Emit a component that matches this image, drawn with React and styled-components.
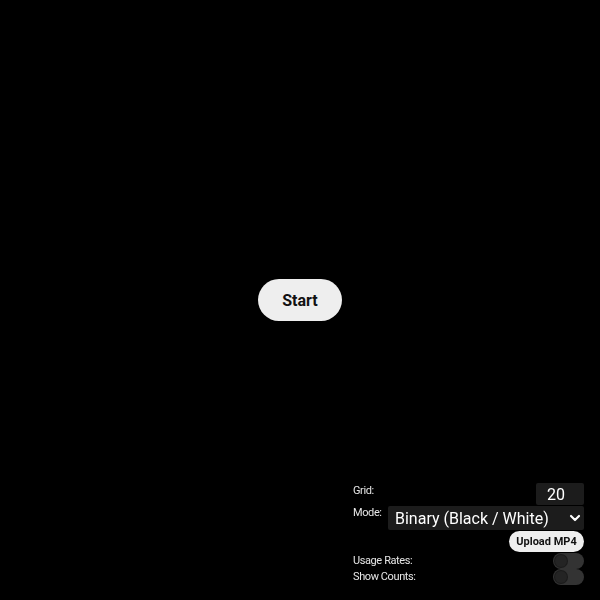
import React, { useState } from 'react';
import styled, { createGlobalStyle } from 'styled-components';
import { ChevronDown } from 'lucide-react';

const GlobalStyle = createGlobalStyle`
  html, body {
    margin: 0;
    padding: 0;
    background: #000;
    font-family: Roboto, 'Liberation Sans', sans-serif;
  }
`;

const Stage = styled.main`
  width: 100vw;
  height: 100vh;
  display: flex;
  align-items: center;
  justify-content: center;
  background: #000;
`;

const StartButton = styled.button`
  width: 84px;
  height: 42px;
  border: none;
  border-radius: 21px;
  background: #eeeeee;
  color: #111;
  font-family: Roboto, 'Liberation Sans', sans-serif;
  font-size: 16px;
  font-weight: 700;
  cursor: pointer;
`;

const Panel = styled.div`
  position: fixed;
  right: 16px;
  bottom: 15px;
  width: 231px;
  display: flex;
  flex-direction: column;
  font-size: 11px;
  color: #e6e6e6;
`;

const Row = styled.div`
  display: flex;
  justify-content: space-between;
  align-items: ${(p) => (p.$center ? 'center' : 'flex-start')};
  margin-bottom: ${(p) => p.$gap || 0}px;
  line-height: 14px;
`;

const Label = styled.label`
  padding-top: ${(p) => p.$top || 0}px;
  letter-spacing: -0.4px;
`;

const NumberInput = styled.input`
  width: 48px;
  height: 22px;
  box-sizing: border-box;
  padding: 0 0 0 11px;
  border: none;
  border-radius: 2px;
  background: #1c1c1c;
  color: #fff;
  font-family: Roboto, 'Liberation Sans', sans-serif;
  font-size: 16px;
  outline: none;
  -moz-appearance: textfield;
  &::-webkit-inner-spin-button,
  &::-webkit-outer-spin-button {
    -webkit-appearance: none;
    margin: 0;
  }
`;

const SelectWrap = styled.div`
  position: relative;
  width: 196px;
  height: 24px;
`;

const Select = styled.select`
  width: 100%;
  height: 100%;
  appearance: none;
  border: none;
  border-radius: 2px;
  padding: 0 0 0 7px;
  background: #1c1c1c;
  color: #fff;
  font-family: Roboto, 'Liberation Sans', sans-serif;
  font-size: 16px;
  outline: none;
`;

const Chevron = styled(ChevronDown)`
  position: absolute;
  right: 1px;
  top: 4px;
  pointer-events: none;
`;

const ButtonRow = styled.div`
  display: flex;
  justify-content: flex-end;
  margin-bottom: 1px;
`;

const UploadButton = styled.button`
  width: 75px;
  height: 21px;
  padding: 0;
  border: none;
  border-radius: 11px;
  background: #eeeeee;
  color: #111;
  font-family: Roboto, 'Liberation Sans', sans-serif;
  font-size: 11px;
  font-weight: 700;
  cursor: pointer;
`;

const Toggle = styled.button`
  width: 31px;
  height: 16px;
  padding: 2px;
  border: none;
  border-radius: 8px;
  background: ${(p) => (p.$on ? '#4a4a4a' : '#333')};
  display: flex;
  justify-content: ${(p) => (p.$on ? 'flex-end' : 'flex-start')};
  align-items: center;
  box-sizing: border-box;
  cursor: pointer;
`;

const Knob = styled.span`
  width: 12px;
  height: 12px;
  border-radius: 50%;
  background: #242424;
  box-shadow: 0 0 0 1px #1b1b1b;
`;

export default function App() {
  const [grid, setGrid] = useState(20);
  const [mode, setMode] = useState('binary');
  const [usage, setUsage] = useState(false);
  const [counts, setCounts] = useState(false);

  return (
    <>
      <GlobalStyle />
      <Stage>
        <StartButton>Start</StartButton>
      </Stage>
      <Panel>
        <Row $gap={1}>
          <Label $top={1}>Grid:</Label>
          <NumberInput
            type="number"
            value={grid}
            onChange={(e) => setGrid(e.target.value)}
          />
        </Row>
        <Row $gap={1}>
          <Label $top={0}>Mode:</Label>
          <SelectWrap>
            <Select value={mode} onChange={(e) => setMode(e.target.value)}>
              <option value="binary">Binary (Black / White)</option>
              <option value="gray">Grayscale</option>
              <option value="color">Color</option>
            </Select>
            <Chevron size={16} strokeWidth={3.2} color="#fff" />
          </SelectWrap>
        </Row>
        <ButtonRow>
          <UploadButton>Upload MP4</UploadButton>
        </ButtonRow>
        <Row $center>
          <Label>Usage Rates:</Label>
          <Toggle $on={usage} onClick={() => setUsage(!usage)}>
            <Knob />
          </Toggle>
        </Row>
        <Row $center>
          <Label>Show Counts:</Label>
          <Toggle $on={counts} onClick={() => setCounts(!counts)}>
            <Knob />
          </Toggle>
        </Row>
      </Panel>
    </>
  );
}
